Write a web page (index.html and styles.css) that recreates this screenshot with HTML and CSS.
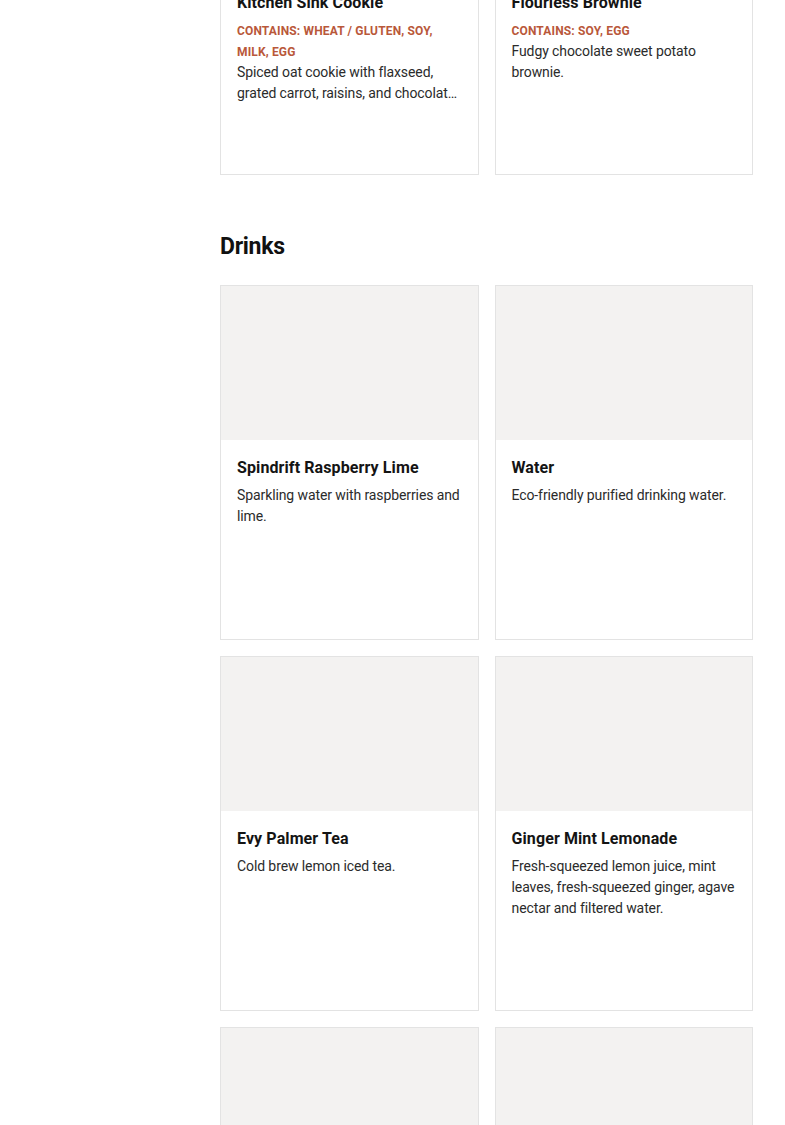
FILE: index.html
```html
<!DOCTYPE html>
<html lang="en">
<head>
<meta charset="utf-8">
<title>Menu</title>
<link rel="stylesheet" href="styles.css">
</head>
<body>
<div class="page">
  <aside class="sidebar"></aside>
  <main class="menu">
    <section class="section section-first">
      <div class="grid">
        <article class="card">
          <div class="card-image"></div>
          <div class="card-body">
            <h3 class="card-title">Kitchen Sink Cookie</h3>
            <p class="card-allergens">Contains: Wheat / Gluten, Soy, Milk, Egg</p>
            <p class="card-desc clamp">Spiced oat cookie with flaxseed, grated carrot, raisins, and chocolate chips.</p>
          </div>
        </article>
        <article class="card">
          <div class="card-image"></div>
          <div class="card-body">
            <h3 class="card-title">Flourless Brownie</h3>
            <p class="card-allergens">Contains: Soy, Egg</p>
            <p class="card-desc">Fudgy chocolate sweet potato brownie.</p>
          </div>
        </article>
      </div>
    </section>
    <section class="section">
      <h2 class="section-title">Drinks</h2>
      <div class="grid">
        <article class="card">
          <div class="card-image"></div>
          <div class="card-body">
            <h3 class="card-title">Spindrift Raspberry Lime</h3>
            <p class="card-desc">Sparkling water with raspberries and lime.</p>
          </div>
        </article>
        <article class="card">
          <div class="card-image"></div>
          <div class="card-body">
            <h3 class="card-title">Water</h3>
            <p class="card-desc">Eco-friendly purified drinking water.</p>
          </div>
        </article>
        <article class="card">
          <div class="card-image"></div>
          <div class="card-body">
            <h3 class="card-title">Evy Palmer Tea</h3>
            <p class="card-desc">Cold brew lemon iced tea.</p>
          </div>
        </article>
        <article class="card">
          <div class="card-image"></div>
          <div class="card-body">
            <h3 class="card-title">Ginger Mint Lemonade</h3>
            <p class="card-desc">Fresh-squeezed lemon juice, mint leaves, fresh-squeezed ginger, agave nectar and filtered water.</p>
          </div>
        </article>
        <article class="card">
          <div class="card-image"></div>
          <div class="card-body">
            <h3 class="card-title">Sparkling Water</h3>
            <p class="card-desc">Refreshing sparkling water.</p>
          </div>
        </article>
        <article class="card">
          <div class="card-image"></div>
          <div class="card-body">
            <h3 class="card-title">Iced Coffee</h3>
            <p class="card-desc">Cold brew coffee.</p>
          </div>
        </article>
      </div>
    </section>
  </main>
</div>
</body>
</html>
```
FILE: styles.css
```css
html, body {
  margin: 0;
  padding: 0;
  background: #ffffff;
  overflow: hidden;
}
body {
  font-family: Roboto, "Liberation Sans", Arial, sans-serif;
  color: #1f1f1f;
}
.page {
  display: grid;
  grid-template-columns: 156px 533px;
  column-gap: 32px;
  padding: 0 32px;
}
.sidebar {
  min-height: 10px;
}
.section-first {
  margin-top: -180px;
}
.section {
  margin-bottom: 57px;
}
.section-title {
  margin: 0 0 23px;
  font-size: 23px;
  line-height: 30px;
  font-weight: 700;
  color: #111;
  letter-spacing: -0.3px;
}
.grid {
  display: grid;
  grid-template-columns: 1fr 1fr;
  gap: 16px;
}
.card {
  border: 1px solid #e3e3e3;
  height: 355px;
  box-sizing: border-box;
  background: #fff;
  display: flex;
  flex-direction: column;
}
.card-image {
  height: 154px;
  background: #f3f2f1;
  flex: none;
}
.card-body {
  padding: 16px;
}
.card-title {
  margin: 0;
  font-size: 16px;
  line-height: 24px;
  font-weight: 700;
  color: #141414;
  letter-spacing: 0.1px;
}
.card-allergens {
  margin: 6px 0 0;
  font-size: 12px;
  line-height: 21px;
  font-weight: 700;
  text-transform: uppercase;
  color: #b9583a;
  letter-spacing: 0.15px;
}
.card-desc {
  margin: 5px 0 0;
  font-size: 14px;
  line-height: 21px;
  color: #2b2b2b;
  letter-spacing: -0.1px;
}
.card-allergens + .card-desc {
  margin-top: -1px;
}
.clamp {
  display: -webkit-box;
  -webkit-line-clamp: 2;
  -webkit-box-orient: vertical;
  overflow: hidden;
}
```
